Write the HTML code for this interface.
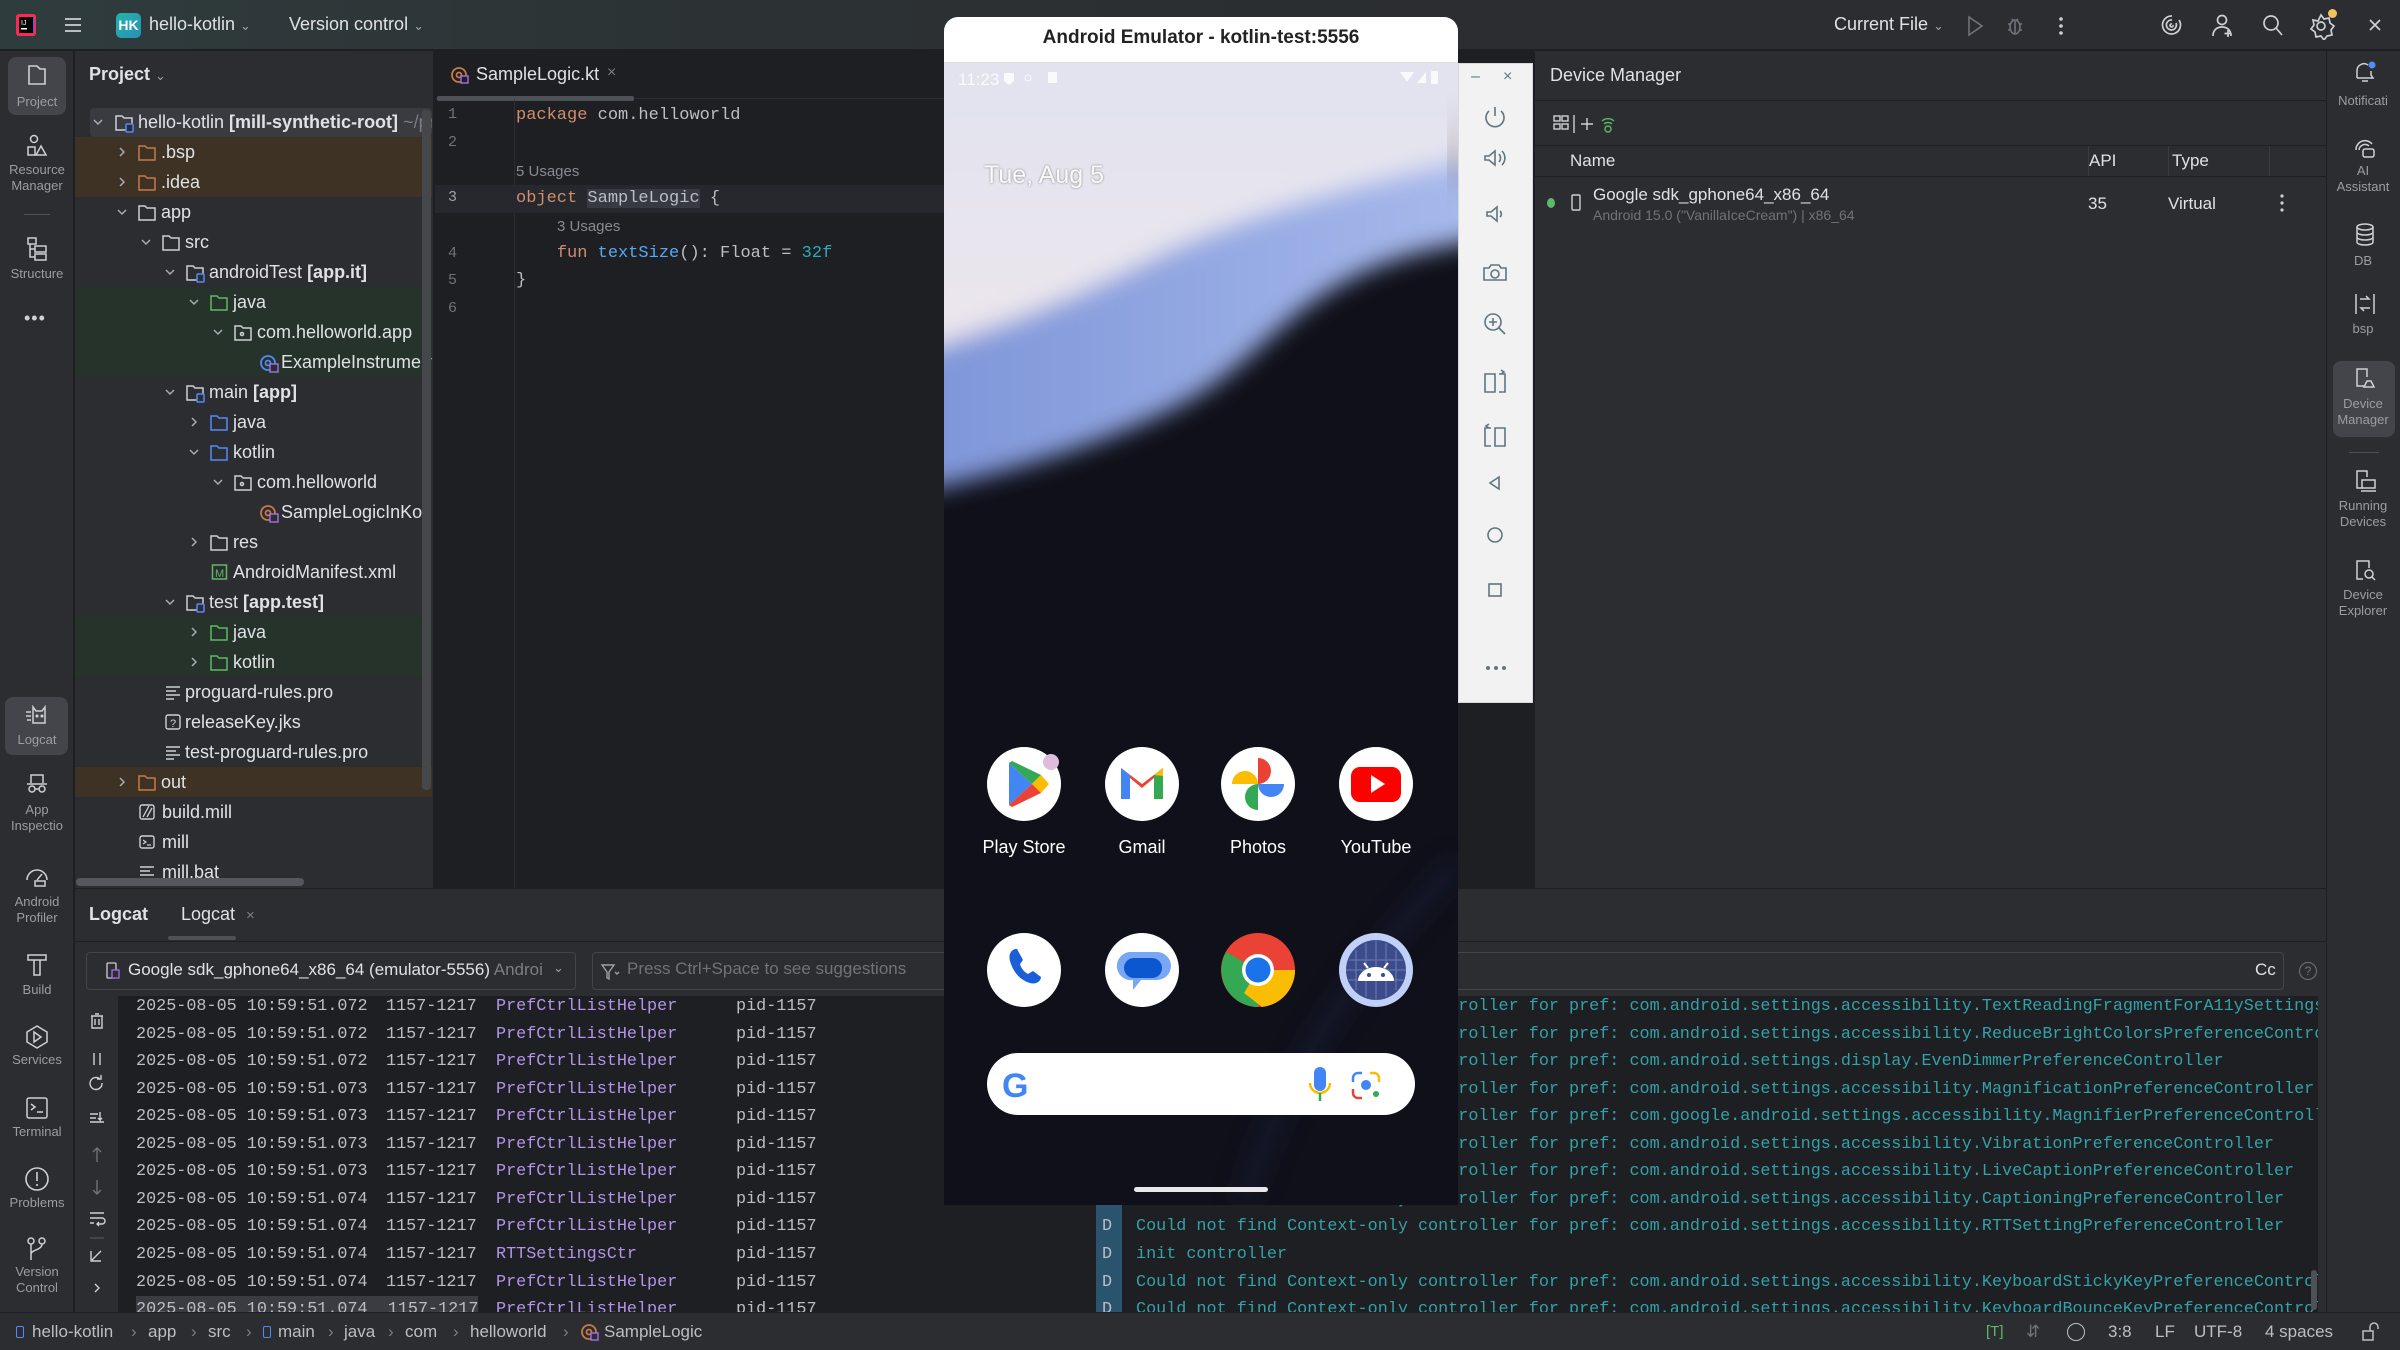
<!DOCTYPE html>
<html><head><meta charset="utf-8">
<style>
*{box-sizing:border-box;margin:0;padding:0}
body{width:2400px;height:1350px;overflow:hidden;background:#1e1f22;font-family:"Liberation Sans",sans-serif;color:#dfe1e5;position:relative}
.a{position:absolute}
.mono{font-family:"Liberation Mono",monospace}
.lbl{position:absolute;width:74px;text-align:center;font-size:13px;color:#9a9da3;line-height:16px;overflow:hidden;white-space:nowrap}
.rl{position:absolute;width:74px;text-align:center;font-size:13px;color:#9a9da3;line-height:16px;overflow:hidden;white-space:nowrap}
.row{position:absolute;left:74px;width:358px;height:30px;line-height:30px;font-size:18px;white-space:nowrap}
.row span.t{position:absolute}
.row svg{position:absolute}
.log{position:absolute;left:118px;width:2200px;height:27.5px;line-height:27.5px;font-size:16.8px;white-space:pre;font-family:"Liberation Mono",monospace}
.log span{position:absolute}
.code{position:absolute;left:516px;font-size:17px;line-height:28px;white-space:pre;font-family:"Liberation Mono",monospace}
.ln{position:absolute;left:448px;width:20px;font-size:15px;color:#6f737a;font-family:"Liberation Mono",monospace}
</style></head><body>

<!-- TITLE BAR -->
<div class="a" style="left:0;top:0;width:2400px;height:50px;background:linear-gradient(90deg,#2f3c3d 0%,#2c3234 30%,#2b2d30 60%);border-bottom:1px solid #1e1f22"></div>
<svg class="a" style="left:15px;top:13px" width="22" height="24"><rect x="1" y="1" width="20" height="22" rx="3" fill="#fe2857"/><rect x="5" y="4" width="14" height="16" fill="#087cfa"/><rect x="4" y="4" width="14" height="16" fill="#000"/><text x="6" y="12" font-size="7" fill="#fff" font-family="Liberation Sans">IJ</text><rect x="6" y="15" width="6" height="1.5" fill="#fff"/></svg>
<svg class="a" style="left:63px;top:15px" width="20" height="20"><path d="M2 4h16M2 10h16M2 16h16" stroke="#ced0d6" stroke-width="1.8"/></svg>
<div class="a" style="left:116px;top:13px;width:25px;height:25px;border-radius:5px;background:linear-gradient(135deg,#23b3a8,#2a8fb8);font-size:14px;color:#fff;text-align:center;line-height:25px;font-weight:bold">HK</div>
<div class="a" style="left:149px;top:14px;font-size:18px;color:#dfe1e5">hello-kotlin <span style="font-size:13px;color:#9da0a8">&#8964;</span></div>
<div class="a" style="left:289px;top:14px;font-size:18px;color:#dfe1e5">Version control <span style="font-size:13px;color:#9da0a8">&#8964;</span></div>
<div class="a" style="left:1834px;top:14px;font-size:18px;color:#dfe1e5">Current File <span style="font-size:13px;color:#9da0a8">&#8964;</span></div>
<svg class="a" style="left:1965px;top:14px" width="130" height="24"><path d="M4 3l13 9-13 9z" fill="none" stroke="#6f737a" stroke-width="1.6"/><g transform="translate(42,2)" stroke="#6f737a" fill="none" stroke-width="1.6"><ellipse cx="8" cy="11" rx="5" ry="7"/><path d="M8 5v13M1 8h3M12 8h3M1 14h3M12 14h3M5 3l2 2M11 3l-2 2"/></g><g fill="#ced0d6"><circle cx="96" cy="5" r="1.8"/><circle cx="96" cy="12" r="1.8"/><circle cx="96" cy="19" r="1.8"/></g></svg>
<svg class="a" style="left:2158px;top:12px" width="240" height="28" fill="none" stroke="#ced0d6" stroke-width="1.7">
<path d="M14 4a9 9 0 1 0 7 4M14 8a5 5 0 1 0 4 3M14 12a1.5 1.5 0 1 0 1 1"/>
<circle cx="64" cy="8" r="4.5"/><path d="M55 24c0-6 4-9 9-9s9 3 9 9M70 18v7M66.5 21.5h7"/>
<circle cx="113" cy="11" r="7"/><path d="M118 16l6 7"/>
<circle cx="163" cy="14" r="4"/><path d="M163 3l3 4 5-1 1 5 4 3-3 4 1 5-5 1-3 4-3-4-5 1-1-5-4-3 3-4-1-5 5 1z"/>
<path d="M212 8l10 10M222 8l-10 10"/></svg>
<div class="a" style="left:2328px;top:9px;width:9px;height:9px;border-radius:50%;background:#f2c55c"></div>

<!-- LEFT STRIP -->
<div class="a" style="left:0;top:51px;width:74px;height:1261px;background:#2b2d30;border-right:1px solid #1e1f22"></div>
<div class="a" style="left:8px;top:57px;width:58px;height:58px;border-radius:8px;background:#43454a"></div>
<svg class="a" style="left:26px;top:64px" width="22" height="22"><path d="M3 2h8l3 3h5v15H3z" fill="none" stroke="#ced0d6" stroke-width="1.6"/></svg>
<div class="lbl" style="left:0;top:94px">Project</div>
<svg class="a" style="left:26px;top:134px" width="22" height="24" fill="none" stroke="#ced0d6" stroke-width="1.5"><circle cx="8" cy="5" r="3.5"/><rect x="2" y="13" width="7" height="8"/><path d="M15 12l5 9h-10z"/></svg>
<div class="lbl" style="left:0;top:162px">Resource<br>Manager</div>
<div class="a" style="left:24px;top:214px;width:26px;height:1px;background:#4e5157"></div>
<svg class="a" style="left:26px;top:236px" width="22" height="26" fill="none" stroke="#ced0d6" stroke-width="1.5"><rect x="2" y="2" width="8" height="6"/><rect x="9" y="10" width="11" height="6"/><rect x="9" y="18" width="11" height="6"/><path d="M4 8v13h5M4 13h5"/></svg>
<div class="lbl" style="left:0;top:266px">Structure</div>
<div class="a" style="left:24px;top:308px;font-size:18px;color:#ced0d6;letter-spacing:1px">&#8226;&#8226;&#8226;</div>
<div class="a" style="left:5px;top:697px;width:63px;height:58px;border-radius:8px;background:#43454a"></div>
<svg class="a" style="left:24px;top:704px" width="26" height="22" fill="none" stroke="#ced0d6" stroke-width="1.5"><path d="M9 3l3 4h6l3-4v16H9zM2 8h5M2 12h5M3 16h4"/><circle cx="13" cy="12" r=".8"/><circle cx="18" cy="12" r=".8"/></svg>
<div class="lbl" style="left:0;top:732px">Logcat</div>
<svg class="a" style="left:24px;top:772px" width="26" height="22" fill="none" stroke="#ced0d6" stroke-width="1.5"><path d="M7 11V3h12v8M3 12h20"/><circle cx="8" cy="17" r="3"/><circle cx="18" cy="17" r="3"/><path d="M11 17h4"/></svg>
<div class="lbl" style="left:0;top:802px">App<br>Inspectio</div>
<svg class="a" style="left:24px;top:864px" width="26" height="24" fill="none" stroke="#ced0d6" stroke-width="1.5"><path d="M3 16a10 10 0 1 1 20 0"/><path d="M13 16l5-6"/><rect x="11" y="17" width="10" height="5"/></svg>
<div class="lbl" style="left:0;top:894px">Android<br>Profiler</div>
<svg class="a" style="left:26px;top:952px" width="22" height="26" fill="none" stroke="#ced0d6" stroke-width="1.5"><path d="M2 3h18v5H2zM8 8v15h6V8"/></svg>
<div class="lbl" style="left:0;top:982px">Build</div>
<svg class="a" style="left:24px;top:1024px" width="26" height="26" fill="none" stroke="#ced0d6" stroke-width="1.5"><path d="M13 2l10 6v10l-10 6-10-6V8z"/><path d="M10 8l7 5-7 5z"/></svg>
<div class="lbl" style="left:0;top:1052px">Services</div>
<svg class="a" style="left:25px;top:1096px" width="24" height="24" fill="none" stroke="#ced0d6" stroke-width="1.5"><rect x="2" y="2" width="20" height="20" rx="2"/><path d="M6 8l4 3-4 3M12 16h6"/></svg>
<div class="lbl" style="left:0;top:1124px">Terminal</div>
<svg class="a" style="left:24px;top:1166px" width="26" height="26" fill="none" stroke="#ced0d6" stroke-width="1.6"><circle cx="13" cy="13" r="11"/><path d="M13 6v9M13 18v2"/></svg>
<div class="lbl" style="left:0;top:1195px">Problems</div>
<svg class="a" style="left:26px;top:1236px" width="22" height="26" fill="none" stroke="#ced0d6" stroke-width="1.5"><circle cx="5" cy="5" r="3"/><circle cx="16" cy="5" r="3"/><path d="M5 8v16M16 8c0 6-11 6-11 10"/></svg>
<div class="lbl" style="left:0;top:1264px">Version<br>Control</div>

<!-- PROJECT PANEL -->
<div class="a" style="left:75px;top:51px;width:359px;height:837px;background:#2b2d30;border-right:1px solid #1e1f22;overflow:hidden">
</div>
<div class="a" style="left:89px;top:64px;font-size:18px;font-weight:bold;color:#dfe1e5">Project <span style="font-size:13px;font-weight:normal;color:#9da0a8">&#8964;</span></div>
<div class="a" style="left:75px;top:137px;width:357px;height:60px;background:#3d3223"></div>
<div class="a" style="left:75px;top:287px;width:357px;height:90px;background:#26332a"></div>
<div class="a" style="left:75px;top:617px;width:357px;height:60px;background:#26332a"></div>
<div class="a" style="left:75px;top:767px;width:357px;height:30px;background:#3d3223"></div>
<div class="a" style="left:90px;top:108px;width:342px;height:29px;border-radius:4px;background:#393b40"></div>

<div class="a" style="left:75px;top:107px;width:357px;height:780px;overflow:hidden">
<div style="position:relative;left:-75px;top:-107px">
<div class="row" style="top:107px"><svg style="left:18px;top:9px" width="12" height="12"><path d="M2 4l4 4 4-4" stroke="#a8abb2" fill="none" stroke-width="1.5"/></svg><svg style="left:40px;top:5px" width="22" height="22" fill="none" stroke-width="1.5"><path d="M2 4h6l2 2h8v12H2z" stroke="#ced0d6"/><rect x="12" y="12" width="7" height="8" rx="1" stroke="#548af7" fill="#2b2d30"/></svg><span class="t" style="left:64px">hello-kotlin <b>[mill-synthetic-root]</b> <span style="color:#7b7e85">~/pr</span></span></div>
<div class="row" style="top:137px"><svg style="left:42px;top:9px" width="12" height="12"><path d="M4 2l4 4-4 4" stroke="#a8abb2" fill="none" stroke-width="1.5"/></svg><svg style="left:63px;top:5px" width="22" height="22"><path d="M2 4h6l2 2h8v12H2z" stroke="#c7794a" fill="none" stroke-width="1.5"/></svg><span class="t" style="left:87px">.bsp</span></div>
<div class="row" style="top:167px"><svg style="left:42px;top:9px" width="12" height="12"><path d="M4 2l4 4-4 4" stroke="#a8abb2" fill="none" stroke-width="1.5"/></svg><svg style="left:63px;top:5px" width="22" height="22"><path d="M2 4h6l2 2h8v12H2z" stroke="#c7794a" fill="none" stroke-width="1.5"/></svg><span class="t" style="left:87px">.idea</span></div>
<div class="row" style="top:197px"><svg style="left:42px;top:9px" width="12" height="12"><path d="M2 4l4 4 4-4" stroke="#a8abb2" fill="none" stroke-width="1.5"/></svg><svg style="left:63px;top:5px" width="22" height="22"><path d="M2 4h6l2 2h8v12H2z" stroke="#ced0d6" fill="none" stroke-width="1.5"/></svg><span class="t" style="left:87px">app</span></div>
<div class="row" style="top:227px"><svg style="left:66px;top:9px" width="12" height="12"><path d="M2 4l4 4 4-4" stroke="#a8abb2" fill="none" stroke-width="1.5"/></svg><svg style="left:87px;top:5px" width="22" height="22"><path d="M2 4h6l2 2h8v12H2z" stroke="#ced0d6" fill="none" stroke-width="1.5"/></svg><span class="t" style="left:111px">src</span></div>
<div class="row" style="top:257px"><svg style="left:90px;top:9px" width="12" height="12"><path d="M2 4l4 4 4-4" stroke="#a8abb2" fill="none" stroke-width="1.5"/></svg><svg style="left:111px;top:5px" width="22" height="22" fill="none" stroke-width="1.5"><path d="M2 4h6l2 2h8v12H2z" stroke="#ced0d6"/><rect x="12" y="12" width="7" height="8" rx="1" stroke="#548af7" fill="#2b2d30"/></svg><span class="t" style="left:135px">androidTest <b>[app.it]</b></span></div>
<div class="row" style="top:287px"><svg style="left:114px;top:9px" width="12" height="12"><path d="M2 4l4 4 4-4" stroke="#a8abb2" fill="none" stroke-width="1.5"/></svg><svg style="left:135px;top:5px" width="22" height="22"><path d="M2 4h6l2 2h8v12H2z" stroke="#5fb865" fill="none" stroke-width="1.5"/></svg><span class="t" style="left:159px">java</span></div>
<div class="row" style="top:317px"><svg style="left:138px;top:9px" width="12" height="12"><path d="M2 4l4 4 4-4" stroke="#a8abb2" fill="none" stroke-width="1.5"/></svg><svg style="left:159px;top:5px" width="22" height="22" fill="none" stroke="#ced0d6" stroke-width="1.5"><path d="M2 4h6l2 2h8v12H2z"/><circle cx="9" cy="12" r="1.5"/></svg><span class="t" style="left:183px">com.helloworld.app</span></div>
<div class="row" style="top:347px"><svg style="left:184px;top:5px" width="22" height="22" fill="none" stroke-width="1.8"><circle cx="10" cy="11" r="7" stroke="#548af7"/><circle cx="10" cy="11" r="2.5" stroke="#548af7"/><rect x="12" y="12" width="8" height="8" fill="#2b2d30" stroke="#a571e6" stroke-width="1.4"/></svg><span class="t" style="left:207px">ExampleInstrumented</span></div>
<div class="row" style="top:377px"><svg style="left:90px;top:9px" width="12" height="12"><path d="M2 4l4 4 4-4" stroke="#a8abb2" fill="none" stroke-width="1.5"/></svg><svg style="left:111px;top:5px" width="22" height="22" fill="none" stroke-width="1.5"><path d="M2 4h6l2 2h8v12H2z" stroke="#ced0d6"/><rect x="12" y="12" width="7" height="8" rx="1" stroke="#548af7" fill="#2b2d30"/></svg><span class="t" style="left:135px">main <b>[app]</b></span></div>
<div class="row" style="top:407px"><svg style="left:114px;top:9px" width="12" height="12"><path d="M4 2l4 4-4 4" stroke="#a8abb2" fill="none" stroke-width="1.5"/></svg><svg style="left:135px;top:5px" width="22" height="22"><path d="M2 4h6l2 2h8v12H2z" stroke="#548af7" fill="none" stroke-width="1.5"/></svg><span class="t" style="left:159px">java</span></div>
<div class="row" style="top:437px"><svg style="left:114px;top:9px" width="12" height="12"><path d="M2 4l4 4 4-4" stroke="#a8abb2" fill="none" stroke-width="1.5"/></svg><svg style="left:135px;top:5px" width="22" height="22"><path d="M2 4h6l2 2h8v12H2z" stroke="#548af7" fill="none" stroke-width="1.5"/></svg><span class="t" style="left:159px">kotlin</span></div>
<div class="row" style="top:467px"><svg style="left:138px;top:9px" width="12" height="12"><path d="M2 4l4 4 4-4" stroke="#a8abb2" fill="none" stroke-width="1.5"/></svg><svg style="left:159px;top:5px" width="22" height="22" fill="none" stroke="#ced0d6" stroke-width="1.5"><path d="M2 4h6l2 2h8v12H2z"/><circle cx="9" cy="12" r="1.5"/></svg><span class="t" style="left:183px">com.helloworld</span></div>
<div class="row" style="top:497px"><svg style="left:184px;top:5px" width="22" height="22" fill="none" stroke-width="1.8"><circle cx="10" cy="11" r="7" stroke="#c7794a"/><circle cx="10" cy="11" r="2.5" stroke="#c7794a"/><rect x="12" y="12" width="8" height="8" fill="#2b2d30" stroke="#a571e6" stroke-width="1.4"/></svg><span class="t" style="left:207px">SampleLogicInKotlin</span></div>
<div class="row" style="top:527px"><svg style="left:114px;top:9px" width="12" height="12"><path d="M4 2l4 4-4 4" stroke="#a8abb2" fill="none" stroke-width="1.5"/></svg><svg style="left:135px;top:5px" width="22" height="22"><path d="M2 4h6l2 2h8v12H2z" stroke="#ced0d6" fill="none" stroke-width="1.5"/></svg><span class="t" style="left:159px">res</span></div>
<div class="row" style="top:557px"><svg style="left:137px;top:6px" width="18" height="18"><rect x="1.5" y="2" width="14" height="14" fill="none" stroke="#5fb865" stroke-width="1.5"/><text x="4" y="14" font-size="11" fill="#5fb865" font-family="Liberation Sans">M</text></svg><span class="t" style="left:159px">AndroidManifest.xml</span></div>
<div class="row" style="top:587px"><svg style="left:90px;top:9px" width="12" height="12"><path d="M2 4l4 4 4-4" stroke="#a8abb2" fill="none" stroke-width="1.5"/></svg><svg style="left:111px;top:5px" width="22" height="22" fill="none" stroke-width="1.5"><path d="M2 4h6l2 2h8v12H2z" stroke="#ced0d6"/><rect x="12" y="12" width="7" height="8" rx="1" stroke="#548af7" fill="#2b2d30"/></svg><span class="t" style="left:135px">test <b>[app.test]</b></span></div>
<div class="row" style="top:617px"><svg style="left:114px;top:9px" width="12" height="12"><path d="M4 2l4 4-4 4" stroke="#a8abb2" fill="none" stroke-width="1.5"/></svg><svg style="left:135px;top:5px" width="22" height="22"><path d="M2 4h6l2 2h8v12H2z" stroke="#5fb865" fill="none" stroke-width="1.5"/></svg><span class="t" style="left:159px">java</span></div>
<div class="row" style="top:647px"><svg style="left:114px;top:9px" width="12" height="12"><path d="M4 2l4 4-4 4" stroke="#a8abb2" fill="none" stroke-width="1.5"/></svg><svg style="left:135px;top:5px" width="22" height="22"><path d="M2 4h6l2 2h8v12H2z" stroke="#5fb865" fill="none" stroke-width="1.5"/></svg><span class="t" style="left:159px">kotlin</span></div>
<div class="row" style="top:677px"><svg style="left:90px;top:7px" width="18" height="16"><path d="M2 3h14M2 7h10M2 11h14M2 15h8" stroke="#ced0d6" stroke-width="1.4"/></svg><span class="t" style="left:111px">proguard-rules.pro</span></div>
<div class="row" style="top:707px"><svg style="left:90px;top:6px" width="18" height="18"><rect x="2" y="2" width="14" height="14" rx="2" fill="none" stroke="#ced0d6" stroke-width="1.4"/><text x="6" y="14" font-size="11" fill="#ced0d6" font-family="Liberation Sans">?</text></svg><span class="t" style="left:111px">releaseKey.jks</span></div>
<div class="row" style="top:737px"><svg style="left:90px;top:7px" width="18" height="16"><path d="M2 3h14M2 7h10M2 11h14M2 15h8" stroke="#ced0d6" stroke-width="1.4"/></svg><span class="t" style="left:111px">test-proguard-rules.pro</span></div>
<div class="row" style="top:767px"><svg style="left:42px;top:9px" width="12" height="12"><path d="M4 2l4 4-4 4" stroke="#a8abb2" fill="none" stroke-width="1.5"/></svg><svg style="left:63px;top:5px" width="22" height="22"><path d="M2 4h6l2 2h8v12H2z" stroke="#c7794a" fill="none" stroke-width="1.5"/></svg><span class="t" style="left:87px">out</span></div>
<div class="row" style="top:797px"><svg style="left:64px;top:6px" width="18" height="18"><rect x="2" y="2" width="14" height="14" rx="2" fill="none" stroke="#ced0d6" stroke-width="1.4"/><path d="M5 14l6-11M9 14l5-9" stroke="#ced0d6" stroke-width="1.3"/></svg><span class="t" style="left:88px">build.mill</span></div>
<div class="row" style="top:827px"><svg style="left:64px;top:6px" width="18" height="18"><rect x="2" y="3" width="14" height="12" rx="2" fill="none" stroke="#ced0d6" stroke-width="1.4"/><path d="M5 7l3 2-3 2M9 12h4" stroke="#ced0d6" stroke-width="1.2" fill="none"/></svg><span class="t" style="left:88px">mill</span></div>
<div class="row" style="top:857px"><svg style="left:64px;top:7px" width="18" height="16"><path d="M2 3h14M2 7h10M2 11h14M2 15h8" stroke="#ced0d6" stroke-width="1.4"/></svg><span class="t" style="left:88px">mill.bat</span></div>
</div></div>
<div class="a" style="left:422px;top:110px;width:9px;height:680px;border-radius:4px;background:#45474b"></div>
<div class="a" style="left:76px;top:878px;width:228px;height:8px;border-radius:4px;background:#55575c"></div>

<!-- EDITOR -->
<div class="a" style="left:435px;top:51px;width:1098px;height:837px;background:#1e1f22"></div>
<div class="a" style="left:435px;top:51px;width:1098px;height:48px;background:#1e1f22;border-bottom:1px solid #2b2d30"></div>
<svg class="a" style="left:450px;top:65px" width="20" height="20" fill="none" stroke-width="1.8"><circle cx="9" cy="10" r="7" stroke="#c7794a"/><circle cx="9" cy="10" r="2.5" stroke="#c7794a"/><rect x="11" y="11" width="7" height="7" fill="#1e1f22" stroke="#a571e6" stroke-width="1.4"/></svg>
<div class="a" style="left:476px;top:64px;font-size:18px;color:#dfe1e5">SampleLogic.kt</div>
<div class="a" style="left:607px;top:64px;font-size:16px;color:#7b7e85">&#215;</div>
<div class="a" style="left:437px;top:96px;width:197px;height:5px;background:#4e5157;border-radius:2px"></div>
<div class="a" style="left:514px;top:100px;width:1px;height:788px;background:#2b2d30"></div>
<div class="a" style="left:435px;top:185px;width:1098px;height:28px;background:#26282e"></div>
<div class="ln" style="top:106px">1</div>
<div class="ln" style="top:134px">2</div>
<div class="ln" style="top:189px;color:#a1a3ab">3</div>
<div class="ln" style="top:245px">4</div>
<div class="ln" style="top:272px">5</div>
<div class="ln" style="top:300px">6</div>
<div class="code" style="top:102px"><span style="color:#cf8e6d">package</span> <span style="color:#bcbec4">com.helloworld</span></div>
<div class="a" style="left:516px;top:163px;font-size:15px;color:#868a91">5 Usages</div>
<div class="code" style="top:185px"><span style="color:#cf8e6d">object</span> <span style="color:#bcbec4;background:#373b41">SampleLogic</span><span style="color:#bcbec4"> {</span></div>
<div class="a" style="left:557px;top:218px;font-size:15px;color:#868a91">3 Usages</div>
<div class="code" style="top:240px">    <span style="color:#cf8e6d">fun</span> <span style="color:#56a8f5">textSize</span><span style="color:#bcbec4">(): Float = </span><span style="color:#2aacb8">32f</span></div>
<div class="code" style="top:267px;color:#bcbec4">}</div>

<!-- DEVICE MANAGER -->
<div class="a" style="left:1534px;top:51px;width:792px;height:837px;background:#2b2d30;border-left:1px solid #1e1f22"></div>
<div class="a" style="left:1550px;top:65px;font-size:18px;color:#dfe1e5">Device Manager</div>
<div class="a" style="left:1534px;top:100px;width:792px;height:1px;background:#1e1f22"></div>
<svg class="a" style="left:1552px;top:112px" width="80" height="24" fill="none" stroke="#ced0d6" stroke-width="1.4"><rect x="2" y="4" width="6" height="5"/><rect x="10" y="4" width="6" height="5"/><rect x="2" y="12" width="6" height="5"/><rect x="10" y="12" width="6" height="5"/><path d="M22 3v18"/><path d="M35 6v12M29 12h12"/><g stroke="#5fb865"><path d="M50 9a9 9 0 0 1 12 0M52 12a6 6 0 0 1 8 0"/><circle cx="56" cy="17" r="3"/></g></svg>
<div class="a" style="left:1534px;top:145px;width:792px;height:1px;background:#1e1f22"></div>
<div class="a" style="left:1570px;top:151px;font-size:17px;color:#dfe1e5">Name</div>
<div class="a" style="left:2089px;top:151px;font-size:17px;color:#dfe1e5">API</div>
<div class="a" style="left:2172px;top:151px;font-size:17px;color:#dfe1e5">Type</div>
<div class="a" style="left:2088px;top:146px;width:1px;height:30px;background:#393b40"></div>
<div class="a" style="left:2168px;top:146px;width:1px;height:30px;background:#393b40"></div>
<div class="a" style="left:2269px;top:146px;width:1px;height:30px;background:#393b40"></div>
<div class="a" style="left:1534px;top:176px;width:792px;height:1px;background:#1e1f22"></div>
<div class="a" style="left:1547px;top:198px;width:8px;height:10px;border-radius:50%;background:#5fb865"></div>
<svg class="a" style="left:1570px;top:193px" width="12" height="20"><rect x="2" y="2" width="8" height="15" rx="1" fill="none" stroke="#ced0d6" stroke-width="1.4"/></svg>
<div class="a" style="left:1593px;top:185px;font-size:17px;color:#dfe1e5">Google sdk_gphone64_x86_64</div>
<div class="a" style="left:1593px;top:207px;font-size:14px;color:#6f737a">Android 15.0 ("VanillaIceCream") | x86_64</div>
<div class="a" style="left:2088px;top:194px;font-size:17px;color:#dfe1e5">35</div>
<div class="a" style="left:2168px;top:194px;font-size:17px;color:#dfe1e5">Virtual</div>
<svg class="a" style="left:2278px;top:193px" width="8" height="20" fill="#ced0d6"><circle cx="4" cy="3" r="1.6"/><circle cx="4" cy="10" r="1.6"/><circle cx="4" cy="17" r="1.6"/></svg>

<!-- RIGHT STRIP -->
<div class="a" style="left:2326px;top:51px;width:74px;height:1261px;background:#2b2d30;border-left:1px solid #1e1f22"></div>
<svg class="a" style="left:2352px;top:60px" width="26" height="26" fill="none" stroke="#ced0d6" stroke-width="1.5"><path d="M5 18V11a7 7 0 0 1 11-6M5 18h16l-2-3v-4M10 21h6"/><circle cx="20" cy="5" r="3.5" fill="#548af7" stroke="none"/></svg>
<div class="rl" style="left:2326px;top:93px">Notificati</div>
<svg class="a" style="left:2352px;top:136px" width="26" height="26" fill="none" stroke="#ced0d6" stroke-width="1.5"><path d="M4 14a9 9 0 0 1 16-6M7 14a6 6 0 0 1 10-4"/><rect x="11" y="13" width="11" height="8" rx="2"/></svg>
<div class="rl" style="left:2326px;top:163px">AI<br>Assistant</div>
<svg class="a" style="left:2353px;top:222px" width="24" height="26" fill="none" stroke="#ced0d6" stroke-width="1.5"><ellipse cx="12" cy="5" rx="8" ry="3"/><path d="M4 5v15c0 2 4 3 8 3s8-1 8-3V5M4 10c0 2 4 3 8 3s8-1 8-3M4 15c0 2 4 3 8 3s8-1 8-3"/></svg>
<div class="rl" style="left:2326px;top:253px">DB</div>
<svg class="a" style="left:2353px;top:291px" width="24" height="26" fill="none" stroke="#ced0d6" stroke-width="1.5"><path d="M3 3v20M21 3v20M7 8h9l-3-3M17 17H8l3 3"/></svg>
<div class="rl" style="left:2326px;top:321px">bsp</div>
<div class="a" style="left:2333px;top:361px;width:62px;height:76px;border-radius:8px;background:#43454a"></div>
<svg class="a" style="left:2353px;top:366px" width="24" height="24" fill="none" stroke="#ced0d6" stroke-width="1.5"><path d="M12 20H4V3h10v8"/><path d="M11 21l3-6h4l3 6z"/></svg>
<div class="rl" style="left:2326px;top:396px">Device<br>Manager</div>
<div class="a" style="left:2349px;top:452px;width:30px;height:1px;background:#4e5157"></div>
<svg class="a" style="left:2353px;top:468px" width="24" height="26" fill="none" stroke="#ced0d6" stroke-width="1.5"><path d="M10 20H4V3h10v6"/><rect x="9" y="12" width="13" height="8"/><path d="M8 23h15"/></svg>
<div class="rl" style="left:2326px;top:498px">Running<br>Devices</div>
<svg class="a" style="left:2353px;top:558px" width="24" height="26" fill="none" stroke="#ced0d6" stroke-width="1.5"><path d="M10 21H4V3h12v7"/><circle cx="16" cy="16" r="4"/><path d="M19 19l3 3"/></svg>
<div class="rl" style="left:2326px;top:587px">Device<br>Explorer</div>

<!-- BOTTOM LOGCAT PANEL -->
<div class="a" style="left:75px;top:888px;width:2251px;height:424px;background:#2b2d30;border-top:1px solid #1e1f22"></div>
<div class="a" style="left:89px;top:904px;font-size:18px;font-weight:bold;color:#dfe1e5">Logcat</div>
<div class="a" style="left:181px;top:904px;font-size:18px;color:#dfe1e5">Logcat <span style="color:#7b7e85;font-size:15px;margin-left:6px">&#215;</span></div>
<div class="a" style="left:168px;top:936px;width:68px;height:4px;background:#4e5157;border-radius:2px"></div>
<div class="a" style="left:75px;top:941px;width:2251px;height:1px;background:#1e1f22"></div>
<div class="a" style="left:86px;top:952px;width:490px;height:38px;border:1px solid #43454a;border-radius:4px;background:#2b2d30"></div>
<svg class="a" style="left:105px;top:961px" width="16" height="20"><rect x="2" y="2" width="9" height="15" rx="1" fill="none" stroke="#ced0d6" stroke-width="1.3"/><rect x="7" y="9" width="7" height="8" fill="#2b2d30" stroke="#a571e6" stroke-width="1.3"/></svg>
<div class="a" style="left:128px;top:960px;width:414px;font-size:17px;color:#dfe1e5;white-space:nowrap;overflow:hidden">Google sdk_gphone64_x86_64 (emulator-5556) <span style="color:#7b7e85">Android 15</span></div>
<div class="a" style="left:553px;top:960px;font-size:13px;color:#9da0a8">&#8964;</div>
<div class="a" style="left:592px;top:952px;width:1692px;height:38px;border:1px solid #43454a;border-radius:4px;background:#2b2d30"></div>
<svg class="a" style="left:600px;top:962px" width="22" height="20" fill="none" stroke="#9da0a8" stroke-width="1.4"><path d="M2 3h12l-5 7v7l-2-1v-6z"/><path d="M15 10l2 2 2-2"/></svg>
<div class="a" style="left:627px;top:959px;font-size:17px;color:#6f737a">Press Ctrl+Space to see suggestions</div>
<div class="a" style="left:2255px;top:960px;font-size:17px;color:#dfe1e5">Cc</div>
<div class="a" style="left:2299px;top:962px;width:18px;height:18px;border:1.3px solid #6f737a;border-radius:50%;font-size:12px;color:#6f737a;text-align:center;line-height:16px">?</div>
<div class="a" style="left:75px;top:996px;width:43px;height:316px;background:#2b2d30"></div>
<svg class="a" style="left:86px;top:1010px" width="22" height="300" fill="none" stroke="#ced0d6" stroke-width="1.4">
<path d="M5 6h12M9 4h4M6 6v12h10V6M9 9v6M13 9v6"/>
<path d="M8 43v12M14 43v12"/>
<path d="M16 73a6 6 0 1 1-2-4M15 65v4h-4"/>
<path d="M4 104h8M4 108h6M4 112h14M14 102v8l-2-2M14 110l2-2"/>
<path d="M11 152V138M7 142l4-4 4 4" stroke="#6f737a"/>
<path d="M11 170v14M7 180l4 4 4-4" stroke="#6f737a"/>
<path d="M4 203h14M4 208h12a3 3 0 0 1 0 6h-4M13 212l-2 2 2 2M4 213h4"/>
<path d="M4 228h14" stroke="#4e5157"/>
<path d="M5 241v10h10M6 250l9-9"/>
<path d="M9 274l4 4-4 4"/></svg>
<div class="a" style="left:118px;top:996px;width:2200px;height:316px;overflow:hidden;background:#1e1f22">
<div style="position:relative;left:-118px;top:-996px">
<div class="a" style="left:1096px;top:996px;width:26px;height:316px;background:#2a546e"></div>
<div class="log" style="top:993px"><span style="left:18px;color:#bcbec4">2025-08-05 10:59:51.072</span><span style="left:268px;color:#bcbec4">1157-1217</span><span style="left:378px;color:#b294e8">PrefCtrlListHelper</span><span style="left:618px;color:#bcbec4">pid-1157</span><span style="left:984px;color:#bcbec4">D</span><span style="left:1018px;color:#33a1a8">Could not find Context-only controller for pref: com.android.settings.accessibility.TextReadingFragmentForA11ySettingsController</span></div>
<div class="log" style="top:1021px"><span style="left:18px;color:#bcbec4">2025-08-05 10:59:51.072</span><span style="left:268px;color:#bcbec4">1157-1217</span><span style="left:378px;color:#b294e8">PrefCtrlListHelper</span><span style="left:618px;color:#bcbec4">pid-1157</span><span style="left:984px;color:#bcbec4">D</span><span style="left:1018px;color:#33a1a8">Could not find Context-only controller for pref: com.android.settings.accessibility.ReduceBrightColorsPreferenceController</span></div>
<div class="log" style="top:1048px"><span style="left:18px;color:#bcbec4">2025-08-05 10:59:51.072</span><span style="left:268px;color:#bcbec4">1157-1217</span><span style="left:378px;color:#b294e8">PrefCtrlListHelper</span><span style="left:618px;color:#bcbec4">pid-1157</span><span style="left:984px;color:#bcbec4">D</span><span style="left:1018px;color:#33a1a8">Could not find Context-only controller for pref: com.android.settings.display.EvenDimmerPreferenceController</span></div>
<div class="log" style="top:1076px"><span style="left:18px;color:#bcbec4">2025-08-05 10:59:51.073</span><span style="left:268px;color:#bcbec4">1157-1217</span><span style="left:378px;color:#b294e8">PrefCtrlListHelper</span><span style="left:618px;color:#bcbec4">pid-1157</span><span style="left:984px;color:#bcbec4">D</span><span style="left:1018px;color:#33a1a8">Could not find Context-only controller for pref: com.android.settings.accessibility.MagnificationPreferenceController</span></div>
<div class="log" style="top:1103px"><span style="left:18px;color:#bcbec4">2025-08-05 10:59:51.073</span><span style="left:268px;color:#bcbec4">1157-1217</span><span style="left:378px;color:#b294e8">PrefCtrlListHelper</span><span style="left:618px;color:#bcbec4">pid-1157</span><span style="left:984px;color:#bcbec4">D</span><span style="left:1018px;color:#33a1a8">Could not find Context-only controller for pref: com.google.android.settings.accessibility.MagnifierPreferenceController</span></div>
<div class="log" style="top:1131px"><span style="left:18px;color:#bcbec4">2025-08-05 10:59:51.073</span><span style="left:268px;color:#bcbec4">1157-1217</span><span style="left:378px;color:#b294e8">PrefCtrlListHelper</span><span style="left:618px;color:#bcbec4">pid-1157</span><span style="left:984px;color:#bcbec4">D</span><span style="left:1018px;color:#33a1a8">Could not find Context-only controller for pref: com.android.settings.accessibility.VibrationPreferenceController</span></div>
<div class="log" style="top:1158px"><span style="left:18px;color:#bcbec4">2025-08-05 10:59:51.073</span><span style="left:268px;color:#bcbec4">1157-1217</span><span style="left:378px;color:#b294e8">PrefCtrlListHelper</span><span style="left:618px;color:#bcbec4">pid-1157</span><span style="left:984px;color:#bcbec4">D</span><span style="left:1018px;color:#33a1a8">Could not find Context-only controller for pref: com.android.settings.accessibility.LiveCaptionPreferenceController</span></div>
<div class="log" style="top:1186px"><span style="left:18px;color:#bcbec4">2025-08-05 10:59:51.074</span><span style="left:268px;color:#bcbec4">1157-1217</span><span style="left:378px;color:#b294e8">PrefCtrlListHelper</span><span style="left:618px;color:#bcbec4">pid-1157</span><span style="left:984px;color:#bcbec4">D</span><span style="left:1018px;color:#33a1a8">Could not find Context-only controller for pref: com.android.settings.accessibility.CaptioningPreferenceController</span></div>
<div class="log" style="top:1213px"><span style="left:18px;color:#bcbec4">2025-08-05 10:59:51.074</span><span style="left:268px;color:#bcbec4">1157-1217</span><span style="left:378px;color:#b294e8">PrefCtrlListHelper</span><span style="left:618px;color:#bcbec4">pid-1157</span><span style="left:984px;color:#bcbec4">D</span><span style="left:1018px;color:#33a1a8">Could not find Context-only controller for pref: com.android.settings.accessibility.RTTSettingPreferenceController</span></div>
<div class="log" style="top:1241px"><span style="left:18px;color:#bcbec4">2025-08-05 10:59:51.074</span><span style="left:268px;color:#bcbec4">1157-1217</span><span style="left:378px;color:#b294e8">RTTSettingsCtr</span><span style="left:618px;color:#bcbec4">pid-1157</span><span style="left:984px;color:#bcbec4">D</span><span style="left:1018px;color:#33a1a8">init controller</span></div>
<div class="log" style="top:1269px"><span style="left:18px;color:#bcbec4">2025-08-05 10:59:51.074</span><span style="left:268px;color:#bcbec4">1157-1217</span><span style="left:378px;color:#b294e8">PrefCtrlListHelper</span><span style="left:618px;color:#bcbec4">pid-1157</span><span style="left:984px;color:#bcbec4">D</span><span style="left:1018px;color:#33a1a8">Could not find Context-only controller for pref: com.android.settings.accessibility.KeyboardStickyKeyPreferenceController</span></div>
<div class="log" style="top:1296px"><span style="left:18px;color:#bcbec4;background:#3a3c41">2025-08-05 10:59:51.074  1157-1217</span><span style="left:378px;color:#b294e8">PrefCtrlListHelper</span><span style="left:618px;color:#bcbec4">pid-1157</span><span style="left:984px;color:#bcbec4">D</span><span style="left:1018px;color:#33a1a8">Could not find Context-only controller for pref: com.android.settings.accessibility.KeyboardBounceKeyPreferenceController</span></div>
</div></div>
<div class="a" style="left:2311px;top:1270px;width:6px;height:40px;background:#4e5157;border-radius:3px"></div>

<!-- STATUS BAR -->
<div class="a" style="left:0;top:1312px;width:2400px;height:38px;background:#2b2d30;border-top:1px solid #1e1f22"></div>
<div class="a" style="left:0;top:1320px;height:24px;font-size:17px;color:#bcbec4;white-space:nowrap;line-height:24px">
<span class="a" style="left:16px;top:6px;width:8px;height:12px;border:1.5px solid #548af7;border-radius:2px"></span>
<span class="a" style="left:32px">hello-kotlin</span><span class="a" style="left:131px;color:#7b7e85">&#8250;</span>
<span class="a" style="left:148px">app</span><span class="a" style="left:191px;color:#7b7e85">&#8250;</span>
<span class="a" style="left:208px">src</span><span class="a" style="left:246px;color:#7b7e85">&#8250;</span>
<span class="a" style="left:263px;top:6px;width:8px;height:12px;border:1.5px solid #548af7;border-radius:2px"></span>
<span class="a" style="left:278px">main</span><span class="a" style="left:328px;color:#7b7e85">&#8250;</span>
<span class="a" style="left:344px">java</span><span class="a" style="left:388px;color:#7b7e85">&#8250;</span>
<span class="a" style="left:405px">com</span><span class="a" style="left:453px;color:#7b7e85">&#8250;</span>
<span class="a" style="left:470px">helloworld</span><span class="a" style="left:563px;color:#7b7e85">&#8250;</span>
<svg class="a" style="left:580px;top:2px" width="20" height="20" fill="none" stroke-width="1.8"><circle cx="9" cy="10" r="7" stroke="#c7794a"/><circle cx="9" cy="10" r="2.5" stroke="#c7794a"/><rect x="11" y="11" width="7" height="7" fill="#2b2d30" stroke="#a571e6" stroke-width="1.4"/></svg>
<span class="a" style="left:604px">SampleLogic</span>
<span class="a" style="left:1986px;color:#5fb865;font-size:15px">[T]</span>
<span class="a" style="left:2026px;color:#6f737a">&#8693;</span>
<span class="a" style="left:2067px;top:3px;width:18px;height:18px;border:1.5px solid #bcbec4;border-radius:50%"></span>
<span class="a" style="left:2108px">3:8</span><span class="a" style="left:2155px">LF</span><span class="a" style="left:2194px">UTF-8</span><span class="a" style="left:2265px">4 spaces</span>
<svg class="a" style="left:2360px;top:2px" width="20" height="20" fill="none" stroke="#bcbec4" stroke-width="1.5"><rect x="3" y="9" width="10" height="9"/><path d="M10 9V5a4 4 0 0 1 8 0v2"/></svg>
</div>

<!-- EMULATOR WINDOW -->
<div class="a" style="left:944px;top:17px;width:514px;height:46px;background:#fff;border-radius:14px 14px 0 0;border-bottom:1px solid #ddd"></div>
<div class="a" style="left:944px;top:27px;width:514px;text-align:center;font-size:19px;font-weight:bold;color:#222">Android Emulator - kotlin-test:5556</div>
<svg class="a" style="left:944px;top:63px" width="514" height="1142">
<defs>
<filter id="bl" x="-20%" y="-20%" width="140%" height="140%"><feGaussianBlur stdDeviation="12"/></filter>
<linearGradient id="tp" x1="0" y1="0" x2="0" y2="1"><stop offset="0" stop-color="#e0e2f0"/><stop offset="1" stop-color="#ece6ec"/></linearGradient>
<linearGradient id="bu" x1="0" y1="0" x2="1" y2="0"><stop offset="0" stop-color="#7d95d8"/><stop offset="1" stop-color="#a9bbec"/></linearGradient>
</defs>
<rect width="514" height="1142" fill="#0f1019"/>
<g filter="url(#bl)">
<path d="M-30 -30H550V95C420 120 300 150 200 200C120 240 40 270 -30 290Z" fill="url(#tp)"/>
<path d="M-30 290C40 270 120 240 200 200C300 150 420 120 550 90V175C480 185 430 200 390 225C330 260 300 310 230 345C150 385 60 410 -30 430Z" fill="url(#bu)"/>
</g>
<path d="M510 60C505 90 500 110 514 130V40Z" fill="#5a4a3a" opacity=".5" filter="url(#bl)"/>
<path d="M300 1142C340 1000 420 900 514 800" stroke="#1c2240" stroke-width="20" fill="none" opacity=".5" filter="url(#bl)"/>
<text x="14" y="22" font-size="17" fill="#fafafa" font-family="Liberation Sans">11:23</text>
<path d="M60 10h10v8l-5 4-5-4z" fill="#fafafa"/><circle cx="84" cy="15" r="3" fill="none" stroke="#fafafa"/><rect x="104" y="9" width="9" height="11" fill="#fafafa"/>
<path d="M456 9h14l-7 10z" fill="#fafafa"/><path d="M473 20l9-11v11z" fill="#fafafa"/><rect x="487" y="8" width="7" height="13" rx="1" fill="#fafafa"/>
<text x="40" y="120" font-size="25" fill="#fafafa" font-family="Liberation Sans" style="text-shadow:0 0 2px #777">Tue, Aug 5</text>
<g font-family="Liberation Sans" font-size="18" fill="#fff" text-anchor="middle">
<circle cx="80" cy="721" r="37" fill="#fff"/>
<path d="M65 700L65 742L88 721Z" fill="#4285f4"/><path d="M65 700L88 721L97 712L68 698Z" fill="#34a853"/><path d="M88 721L97 712L105 721L97 730Z" fill="#fbbc04"/><path d="M65 742L88 721L97 730L68 744Z" fill="#ea4335"/>
<circle cx="107" cy="699" r="8" fill="#e0bcdc"/>
<text x="80" y="790">Play Store</text>
<circle cx="198" cy="721" r="37" fill="#fff"/>
<path d="M177 705v31h9v-21l12 10 12-10v21h9v-31l-21 16z" fill="#ea4335"/><path d="M177 705v31h9v-24z" fill="#4285f4"/><path d="M219 705v31h-9v-24z" fill="#34a853"/><path d="M210 712l9-7v8z" fill="#fbbc04"/>
<text x="198" y="790">Gmail</text>
<circle cx="314" cy="721" r="37" fill="#fff"/>
<path d="M314 721V695a13 13 0 0 1 0 26z" fill="#ea4335"/><path d="M314 721h26a13 13 0 0 1-26 0z" fill="#4285f4"/><path d="M314 721v26a13 13 0 0 1 0-26z" fill="#34a853"/><path d="M314 721h-26a13 13 0 0 1 26 0z" fill="#fbbc04"/>
<text x="314" y="790">Photos</text>
<circle cx="432" cy="721" r="37" fill="#fff"/>
<rect x="407" y="704" width="50" height="35" rx="9" fill="#ff0000"/><path d="M427 712l14 9-14 9z" fill="#fff"/>
<text x="432" y="790">YouTube</text>
</g>
<circle cx="80" cy="907" r="37" fill="#fff"/>
<path d="M72 886c-4 0-8 5-6 12 3 11 10 19 20 22 6 2 11-2 11-6l-8-6-5 3c-4-2-7-6-8-10l3-4-6-11z" fill="#1a5fd8"/>
<circle cx="198" cy="907" r="37" fill="#fff"/>
<path d="M185 889h28a14 14 0 0 1 0 28h-16l-8 10v-10a14 14 0 0 1-4-28z" fill="#7aa7f4"/><rect x="180" y="895" width="38" height="20" rx="10" fill="#0b57d0"/>
<circle cx="314" cy="907" r="37" fill="#ea4335"/>
<path d="M314 907L282 925A37 37 0 0 0 314 944Z" fill="#34a853"/><path d="M282 889A37 37 0 0 0 296 939L314 907Z" fill="#34a853"/>
<path d="M314 907L351 907A37 37 0 0 1 318 944L300 930Z" fill="#fbbc04"/>
<circle cx="314" cy="907" r="16" fill="#fff"/><circle cx="314" cy="907" r="12.5" fill="#1a73e8"/>
<circle cx="432" cy="907" r="37" fill="#c0d0f8"/><circle cx="432" cy="907" r="30" fill="#3c4b8a"/>
<g stroke="#6b7bb8" stroke-width="1"><path d="M412 887v40M422 880v54M432 877v60M442 880v54M452 887v40M405 897h54M402 907h60M405 917h54"/></g>
<path d="M414 918a18 14 0 0 1 36 0z" fill="#fff"/><path d="M420 900l4 5M444 900l-4 5" stroke="#fff" stroke-width="2"/><circle cx="425" cy="912" r="2" fill="#3c4b8a"/><circle cx="439" cy="912" r="2" fill="#3c4b8a"/>
<rect x="43" y="990" width="428" height="62" rx="31" fill="#fff"/>
<text x="58" y="1034" font-size="34" font-weight="bold" font-family="Liberation Sans" fill="#4285f4">G</text>
<rect x="370" y="1004" width="12" height="24" rx="6" fill="#4285f4"/><path d="M366 1020a10 10 0 0 0 20 0" stroke="#fbbc04" stroke-width="2.5" fill="none"/><path d="M376 1030v8" stroke="#34a853" stroke-width="2.5"/>
<path d="M418 1010h-4a5 5 0 0 0-5 5v4" stroke="#4285f4" stroke-width="2.5" fill="none"/><path d="M409 1026v4a5 5 0 0 0 5 5h4" stroke="#ea4335" stroke-width="2.5" fill="none"/><path d="M426 1010h4a5 5 0 0 1 5 5v4" stroke="#fbbc04" stroke-width="2.5" fill="none"/><circle cx="422" cy="1022" r="5" fill="#4285f4"/><circle cx="432" cy="1031" r="3" fill="#34a853"/>
<rect x="190" y="1124" width="134" height="5" rx="2.5" fill="#e8e8e8"/>
</svg>
<div class="a" style="left:1458px;top:63px;width:75px;height:640px;background:#f2f2f2;border:1px solid #d8d8d8"></div>
<div class="a" style="left:1471px;top:68px;font-size:16px;color:#5f7680">&#8211;</div>
<div class="a" style="left:1503px;top:68px;font-size:16px;color:#5f7680">&#215;</div>
<svg class="a" style="left:1480px;top:104px" width="30" height="580" fill="none" stroke="#5f7680" stroke-width="1.6">
<path d="M15 3v9M9 7a9 9 0 1 0 12 0"/>
<path d="M5 52h4l6-5v14l-6-5H5zM19 50a6 6 0 0 1 0 8M22 47a10 10 0 0 1 0 14"/>
<path d="M7 108h4l6-5v14l-6-5H7zM20 107a4 4 0 0 1 0 6"/>
<path d="M4 164h5l2-3h8l2 3h5v12H4z"/><circle cx="15" cy="170" r="4"/>
<circle cx="13" cy="218" r="8"/><path d="M19 224l6 6M13 214v8M9 218h8"/>
<path d="M5 270h10v18H5zM19 270h6v18h-6M21 266l3 2-3 2"/>
<path d="M25 324H15v18h10zM11 324H5v18h6M9 320l-3 2 3 2"/>
<path d="M19 373l-9 6 9 6z"/>
<circle cx="15" cy="431" r="7"/>
<rect x="9" y="480" width="12" height="12"/>
</svg>
<svg class="a" style="left:1484px;top:664px" width="24" height="8" fill="#5f7680"><circle cx="4" cy="4" r="2"/><circle cx="12" cy="4" r="2"/><circle cx="20" cy="4" r="2"/></svg>

</body></html>
